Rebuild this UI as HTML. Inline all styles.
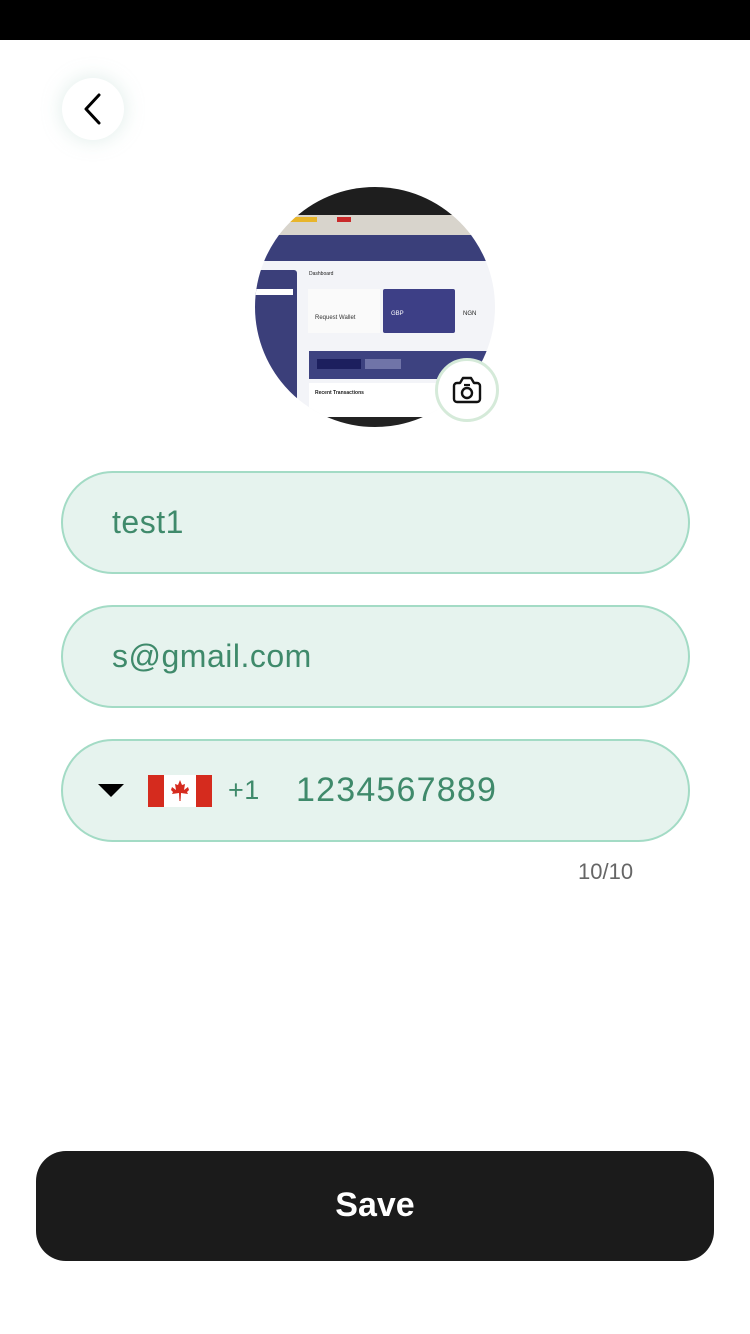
<!DOCTYPE html>
<html><head><meta charset="utf-8"><style>
*{margin:0;padding:0;box-sizing:border-box}
body{width:750px;height:1334px;background:#fff;position:relative;overflow:hidden;font-family:"Liberation Sans",sans-serif}
.top{position:absolute;left:0;top:0;width:750px;height:40px;background:#000}
.back{position:absolute;left:62px;top:78px;width:62px;height:62px;border-radius:50%;background:#fff;box-shadow:0 0 20px rgba(160,200,190,.35)}
.av{position:absolute;left:255px;top:187px;width:240px;height:240px;border-radius:50%;overflow:hidden;background:#f3f4f8}
.av div{position:absolute}
.field{position:absolute;left:61px;width:629px;height:103px;border-radius:52px;background:#e6f3ee;border:2px solid #a3dbc5;color:#3f8a6b;font-size:32px;line-height:99px;padding-left:49px;letter-spacing:0.5px}
.save{position:absolute;left:36px;top:1151px;width:678px;height:110px;border-radius:30px;background:#1b1b1b;color:#fff;font-weight:bold;font-size:34px;text-align:center;line-height:108px}
</style></head><body>
<div class="top"></div>
<div class="back"><svg width="62" height="62" viewBox="0 0 62 62"><path d="M37 17 L24 31 L37 45" fill="none" stroke="#000" stroke-width="3" stroke-linecap="round" stroke-linejoin="round"/></svg></div>
<div class="av">
 <div style="left:0;top:0;width:240px;height:28px;background:#1e1e1e"></div>
 <div style="left:0;top:28px;width:240px;height:20px;background:#d8d4cc"></div>
 <div style="left:30px;top:30px;width:32px;height:5px;background:#e8b52a"></div>
 <div style="left:82px;top:30px;width:14px;height:5px;background:#c92a2a"></div>
 <div style="left:0;top:48px;width:240px;height:26px;background:#3a3f7a"></div>
 <div style="left:0;top:83px;width:42px;height:157px;background:#3b3f7a;border-radius:0 3px 0 0"></div>
 <div style="left:0;top:102px;width:38px;height:6px;background:#fff"></div>
 <div style="left:53px;top:102px;width:72px;height:44px;background:#fafafa"></div>
 <div style="left:60px;top:128px;font-size:6px;color:#333">Request Wallet</div>
 <div style="left:128px;top:102px;width:72px;height:44px;background:#3d3f86;border-radius:2px"></div>
 <div style="left:136px;top:124px;font-size:6px;color:#fff">GBP</div>
 <div style="left:208px;top:124px;font-size:6px;color:#222">NGN</div>
 <div style="left:54px;top:164px;width:190px;height:28px;background:#3d4280"></div>
 <div style="left:62px;top:172px;width:44px;height:10px;background:#1c1f5e"></div>
 <div style="left:110px;top:172px;width:36px;height:10px;background:#7074a8"></div>
 <div style="left:54px;top:196px;width:190px;height:44px;background:#fff"></div>
 <div style="left:60px;top:203px;font-size:5px;color:#222;font-weight:bold">Recent Transactions</div>
 <div style="left:0;top:230px;width:240px;height:10px;background:#222"></div>
 <div style="left:54px;top:84px;font-size:5px;color:#222">Dashboard</div>
</div>
<div style="position:absolute;left:435px;top:358px;width:64px;height:64px;border-radius:50%;background:#fff;border:3px solid #d5ead9"><svg width="58" height="58" viewBox="0 0 58 58"><path d="M19 22 h3 l3-5 h8 l3 5 h3 a3 3 0 0 1 3 3 v13 a3 3 0 0 1-3 3 h-20 a3 3 0 0 1-3-3 v-13 a3 3 0 0 1 3-3z" fill="none" stroke="#111" stroke-width="2.4" stroke-linejoin="round"/><circle cx="29" cy="32" r="5" fill="none" stroke="#111" stroke-width="2.4"/><path d="M26 24 h6" stroke="#111" stroke-width="2.2"/></svg></div>
<div class="field" style="top:471px">test1</div>
<div class="field" style="top:605px">s@gmail.com</div>
<div class="field" style="top:739px;padding-left:0">
 <svg style="position:absolute;left:35px;top:43px" width="26" height="14"><path d="M0 0 H26 L13 13z" fill="#000"/></svg>
 <div style="position:absolute;left:85px;top:34px;width:64px;height:32px;background:#fff">
  <div style="position:absolute;left:0;top:0;width:16px;height:32px;background:#d52b1e"></div>
  <div style="position:absolute;right:0;top:0;width:16px;height:32px;background:#d52b1e"></div>
  <svg style="position:absolute;left:20px;top:3px" width="24" height="26" viewBox="0 0 24 26"><path d="M12 2 L14 7 L17 6 L16 12 L20 9 L21 12 L19 14 L20 16 L13 15 L12.6 21 H11.4 L11 15 L4 16 L5 14 L3 12 L4 9 L8 12 L7 6 L10 7z" fill="#d52b1e"/><rect x="11.4" y="15" width="1.2" height="8" fill="#d52b1e"/></svg>
 </div>
 <span style="position:absolute;left:165px;top:0;font-size:27px">+1</span>
 <span style="position:absolute;left:233px;top:0;font-size:34px;letter-spacing:1.2px">1234567889</span>
</div>
<div style="position:absolute;left:578px;top:859px;font-size:22px;color:#666">10/10</div>
<div class="save">Save</div>
</body></html>
